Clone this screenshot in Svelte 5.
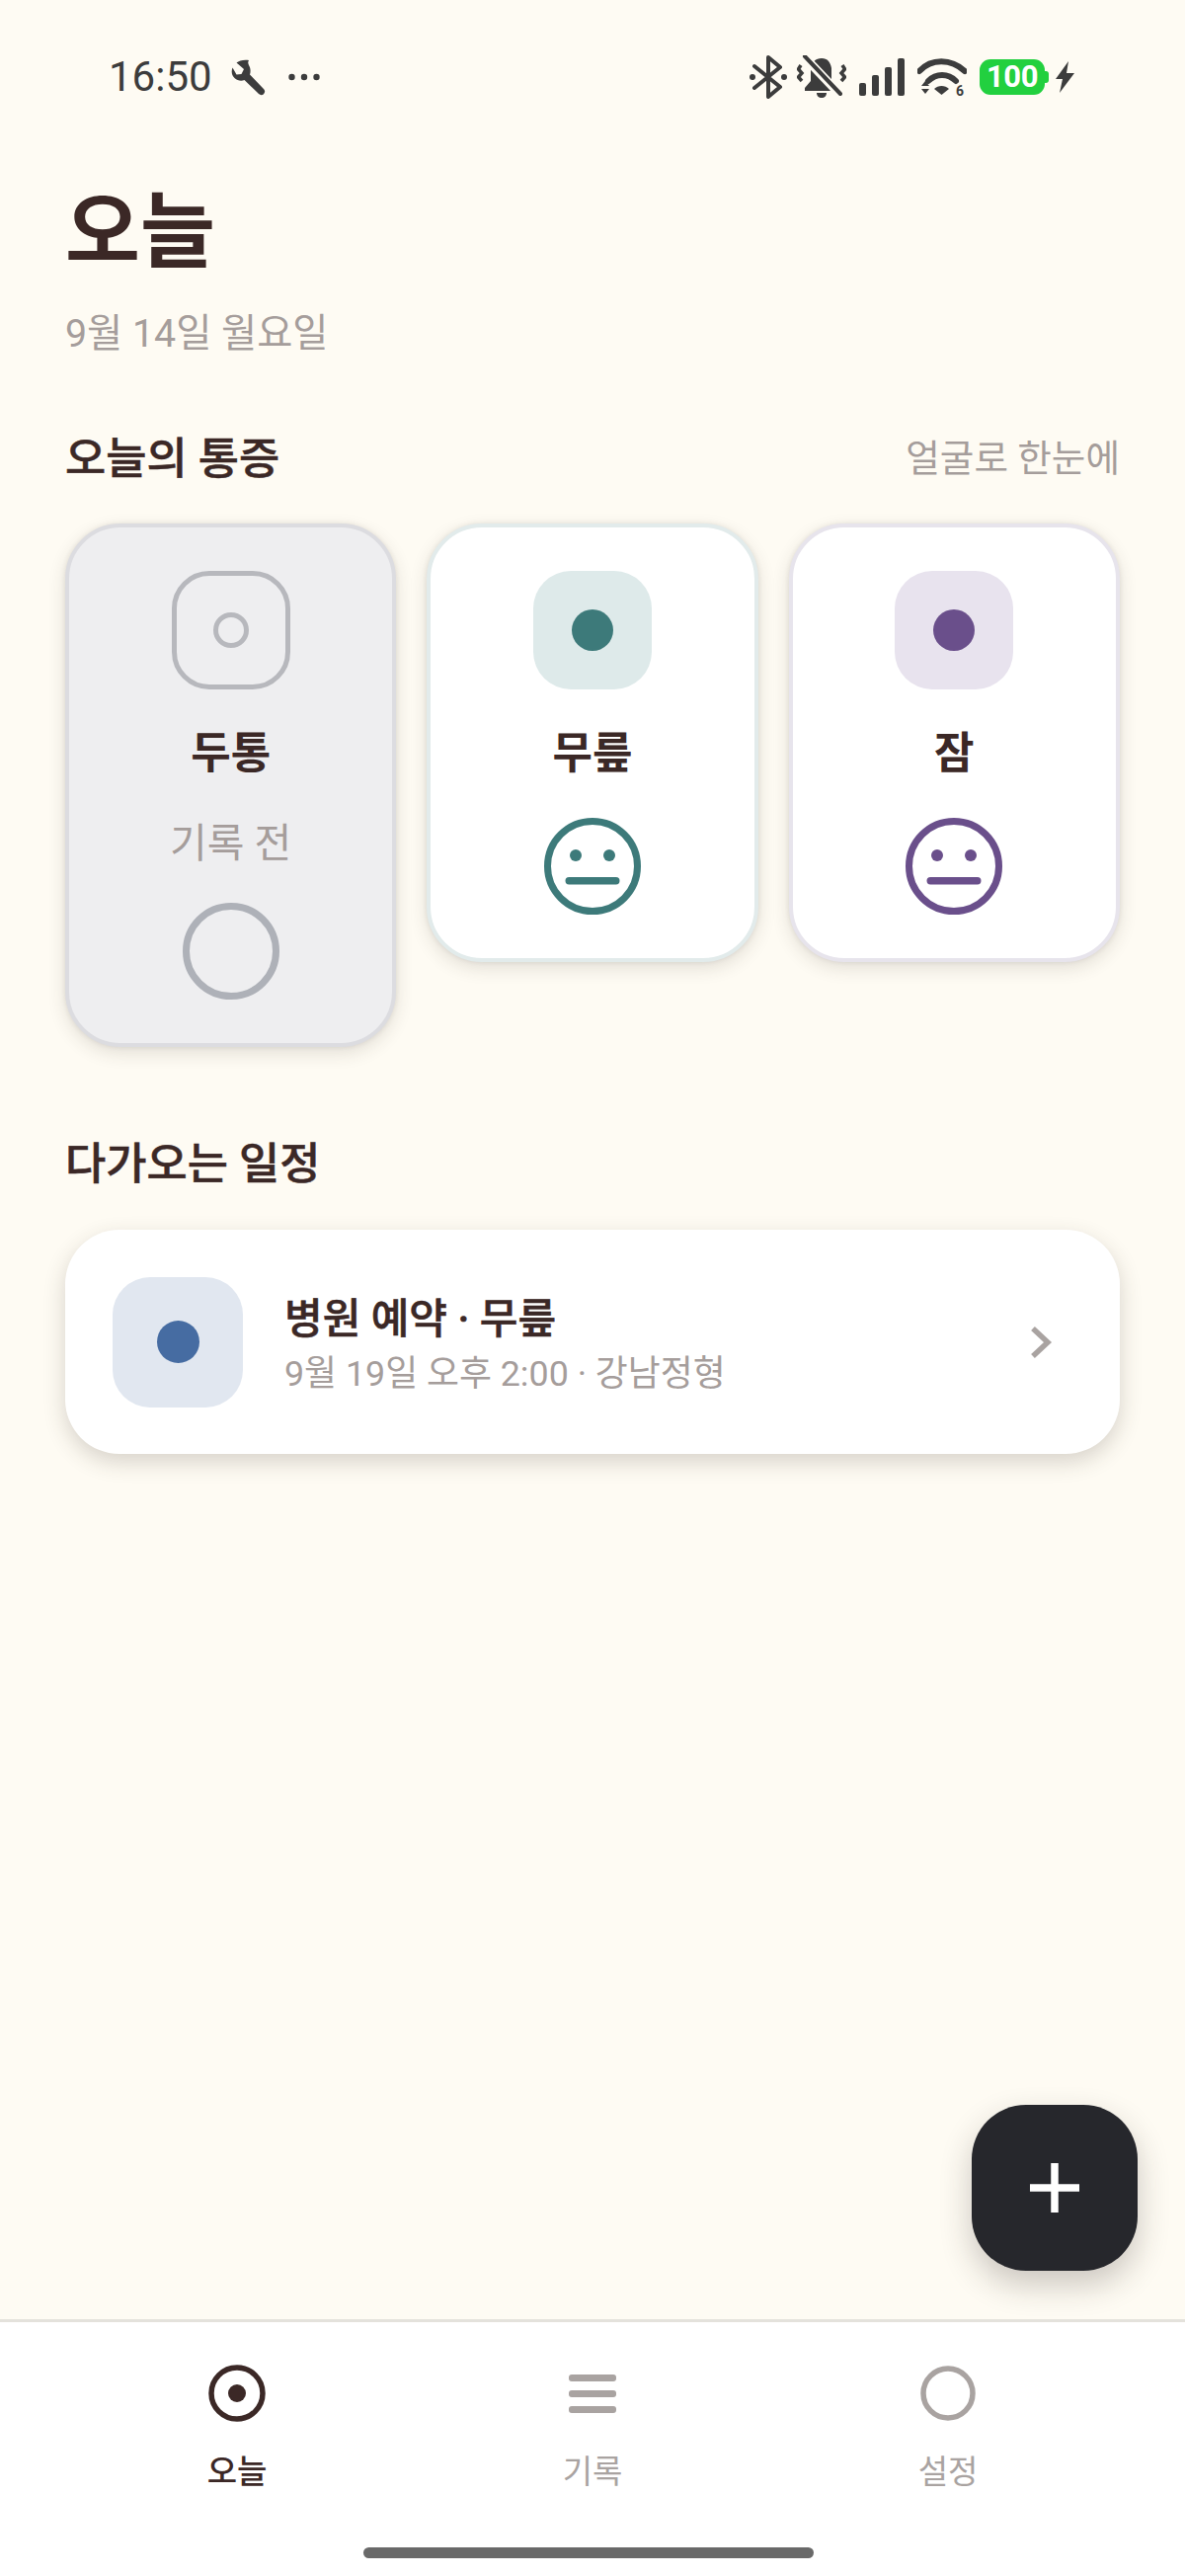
<script lang="ts">
  const pains = [
    { name: '두통', logged: false, tone: '#aeb1b8', tint: 'transparent', edge: '#dcdce0' },
    { name: '무릎', logged: true, tone: '#3d7a7a', tint: '#deeaea', edge: '#e2ebeb' },
    { name: '잠', logged: true, tone: '#6a4f8b', tint: '#e8e3ee', edge: '#e7e4ec' }
  ];
  const tabs = [
    { label: '오늘', kind: 'today' },
    { label: '기록', kind: 'list' },
    { label: '설정', kind: 'ring' }
  ];
</script>

<div class="screen">
  <header class="status">
    <div class="status-left">
      <span class="clock">16:50</span>
      <svg class="wrench" viewBox="0 0 37 37" width="37" height="37" aria-hidden="true">
        <path d="M18 1C13 0 8 1.500 5.500 3.500L13 10l-2.500 5-5 .5L1.500 8.500C0 12 .5 16 3.500 19c3 2.800 7 3.200 10 2l14.500 14c1.500 1.500 3.600 1.500 5 .2 1.500-1.400 1.600-3.500.2-5L19 15.500c1-3 .8-6.500-1-9.500-1-2-1-3.500 0-5z" fill="#3c3c3c"/>
      </svg>
      <svg class="more" viewBox="0 0 32 8" width="32" height="8" aria-hidden="true">
        <circle cx="3.500" cy="4" r="3.200" fill="#3c3c3c"/>
        <circle cx="16" cy="4" r="3.200" fill="#3c3c3c"/>
        <circle cx="28.500" cy="4" r="3.200" fill="#3c3c3c"/>
      </svg>
    </div>
    <div class="status-right">
      <svg viewBox="0 0 40 44" width="40" height="44" aria-hidden="true">
        <path d="M6 11l26 21-12 10V2l12 10L6 33" fill="none" stroke="#3c3c3c" stroke-width="4" stroke-linejoin="round" stroke-linecap="round"/>
        <circle cx="4" cy="22" r="3" fill="#3c3c3c"/>
        <circle cx="36" cy="22" r="3" fill="#3c3c3c"/>
      </svg>
      <svg class="bell" viewBox="0 0 50 44" width="50" height="44" aria-hidden="true">
        <path d="M25 3c-6 0-10 4-11 10v13l-6 7v3h32v-3l-5-6V13c-1-6-4-10-10-10z" fill="#3c3c3c"/>
        <path d="M20 38h10c0 3-2 5-5 5s-5-2-5-5z" fill="#3c3c3c"/>
        <path d="M6 0l38 40" stroke="#fefbf3" stroke-width="9"/>
        <path d="M8 1l36 38" stroke="#3c3c3c" stroke-width="4" stroke-linecap="round"/>
        <path d="M4 10L1.500 14 5 18l-3.500 4 3.500 4M46 10l2.500 4-3.500 4 3.500 4-3.500 4" fill="none" stroke="#3c3c3c" stroke-width="3.500"/>
      </svg>
      <svg class="signal" viewBox="0 0 46 38" width="46" height="38" aria-hidden="true">
        <rect x="0" y="25" width="7" height="13" rx="2" fill="#3c3c3c"/>
        <rect x="13" y="17" width="7" height="21" rx="2" fill="#3c3c3c"/>
        <rect x="26" y="9" width="7" height="29" rx="2" fill="#3c3c3c"/>
        <rect x="39" y="0" width="7" height="38" rx="2" fill="#3c3c3c"/>
      </svg>
      <svg class="wifi" viewBox="0 -2 50 44" width="50" height="44" aria-hidden="true">
        <path d="M2 14C14 1 34 1 48 14" fill="none" stroke="#3c3c3c" stroke-width="6" stroke-linecap="round"/>
        <path d="M11 24c8-8 20-8 28 0" fill="none" stroke="#3c3c3c" stroke-width="6" stroke-linecap="round"/>
        <path d="M17 32c4-4 11-4 15 0l-7.500 6z" fill="#3c3c3c"/>
        <path d="M4 29l4-5 4 5zM4 32l4 5 4-5z" fill="#3c3c3c"/>
        <text x="39" y="39" class="wifi-six">6</text>
      </svg>
      <div class="battery">
        <span class="battery-body">100</span>
        <span class="battery-cap"></span>
      </div>
      <svg class="bolt" viewBox="0 0 19 32" width="19" height="32" aria-hidden="true">
        <path d="M13 0L0 18h7l-3 14L19 12h-8z" fill="#3c3c3c"/>
      </svg>
    </div>
  </header>

  <main class="content">
    <h1>오늘</h1>
    <p class="date">9월 14일 월요일</p>

    <div class="section-head">
      <h2>오늘의 통증</h2>
      <span class="hint">얼굴로 한눈에</span>
    </div>

    <div class="pains">
      {#each pains as p}
        <article
          class="pain"
          class:empty={!p.logged}
          style="--tone: {p.tone}; --tint: {p.tint}; --edge: {p.edge}"
        >
          <div class="tile">
            <span class="dot"></span>
          </div>
          <h3>{p.name}</h3>
          {#if !p.logged}
            <p class="pending">기록 전</p>
            <span class="face-empty"></span>
          {:else}
            <svg class="face" viewBox="0 0 98 98" width="98" height="98" aria-hidden="true">
              <circle cx="49" cy="49" r="45.500" fill="none" stroke={p.tone} stroke-width="7"/>
              <circle cx="32" cy="38" r="6" fill={p.tone}/>
              <circle cx="66" cy="38" r="6" fill={p.tone}/>
              <rect x="21.500" y="60" width="55" height="7.500" rx="3.700" fill={p.tone}/>
            </svg>
          {/if}
        </article>
      {/each}
    </div>

    <h2 class="upcoming">다가오는 일정</h2>

    <div class="event">
      <div class="event-tile"><span class="event-dot"></span></div>
      <div class="event-text">
        <strong>병원 예약 · 무릎</strong>
        <span>9월 19일 오후 2:00 · 강남정형</span>
      </div>
      <svg class="chevron" viewBox="0 0 24 36" width="24" height="36" aria-hidden="true">
        <path d="M4 4l15 14L4 32" fill="none" stroke="#a9a3a1" stroke-width="5.500"/>
      </svg>
    </div>

    <button class="fab" type="button" aria-label="추가">
      <svg viewBox="0 0 50 50" width="50" height="50" aria-hidden="true">
        <path d="M25 0v50M0 25h50" stroke="#fff" stroke-width="7.500"/>
      </svg>
    </button>
  </main>

  <nav class="tabs">
    <div class="tab-row">
      {#each tabs as t, i}
        <div class="tab" class:active={i === 0}>
          <svg viewBox="0 0 58 58" width="58" height="58" aria-hidden="true">
            {#if t.kind === 'today'}
              <circle cx="29" cy="29" r="26" fill="none" stroke="#3b2826" stroke-width="5.500"/>
              <circle cx="29" cy="29" r="9" fill="#3b2826"/>
            {:else if t.kind === 'list'}
              <rect x="5" y="10" width="48" height="7" rx="3" fill="#a9a3a1"/>
              <rect x="5" y="26" width="48" height="7" rx="3" fill="#a9a3a1"/>
              <rect x="5" y="42" width="48" height="7" rx="3" fill="#a9a3a1"/>
            {:else}
              <circle cx="29" cy="29" r="25" fill="none" stroke="#a9a3a1" stroke-width="5.500"/>
            {/if}
          </svg>
          <span>{t.label}</span>
        </div>
      {/each}
    </div>
    <div class="home-bar"></div>
  </nav>
</div>

<style>
  :global(body) {
    margin: 0;
    background: #fefbf3;
  }

  .screen {
    width: 1200px;
    height: 2608px;
    display: flex;
    flex-direction: column;
    background: #fefbf3;
    color: #3b2826;
    font-family: Roboto, "Noto Sans CJK KR", sans-serif;
    overflow: hidden;
  }

  .status {
    height: 186px;
    flex: 0 0 auto;
    box-sizing: border-box;
    padding: 56px 112px 0 110px;
    display: flex;
    justify-content: space-between;
    align-items: flex-start;
  }
  .status-left {
    display: flex;
    align-items: center;
    height: 44px;
  }
  .clock {
    font-size: 42px;
    line-height: 44px;
    color: #3c3c3c;
  }
  .wrench {
    margin-left: 19px;
  }
  .more {
    margin-left: 21px;
  }
  .status-right {
    display: flex;
    align-items: center;
    height: 44px;
  }
  .bell {
    margin-left: 9px;
  }
  .signal {
    margin-left: 13px;
  }
  .wifi {
    margin-left: 13px;
  }
  .wifi-six {
    font-family: Roboto, sans-serif;
    font-weight: 700;
    font-size: 14px;
    fill: #3c3c3c;
  }
  .battery {
    display: flex;
    align-items: center;
    margin-left: 13px;
  }
  .battery-body {
    width: 66px;
    height: 36px;
    border-radius: 11px;
    background: #22d03f;
    color: #fff;
    font-size: 31px;
    font-weight: 700;
    line-height: 36px;
    text-align: center;
    letter-spacing: -0.5px;
  }
  .battery-cap {
    width: 4px;
    height: 12px;
    background: #22d03f;
    border-radius: 0 3px 3px 0;
  }
  .bolt {
    margin-left: 7px;
  }

  .content {
    flex: 1;
    min-height: 0;
    position: relative;
    padding: 0 66px;
  }
  h1 {
    margin: 0;
    font-size: 82.500px;
    line-height: 100px;
    font-weight: 700;
    color: #3b2826;
  }
  .date {
    margin: 26px 0 0;
    font-size: 39.300px;
    line-height: 52px;
    color: #a59d9b;
  }
  .section-head {
    margin-top: 73px;
    display: flex;
    justify-content: space-between;
    align-items: center;
  }
  h2 {
    margin: 0;
    font-size: 44.800px;
    line-height: 56px;
    font-weight: 500;
    -webkit-text-stroke: 0.5px #3b2826;
    color: #3b2826;
  }
  .hint {
    font-size: 37.600px;
    line-height: 44px;
    padding-bottom: 3px;
    color: #a59d9b;
  }

  .pains {
    margin-top: 37px;
    display: grid;
    grid-template-columns: repeat(3, 1fr);
    gap: 31px;
    align-items: start;
  }
  .pain {
    box-sizing: border-box;
    padding: 44px 0 44px;
    border: 4px solid var(--edge);
    border-radius: 56px;
    background: #fff;
    box-shadow:
      0 0 5px rgba(60, 50, 40, 0.1),
      0 6px 18px rgba(60, 50, 40, 0.14);
    display: flex;
    flex-direction: column;
    align-items: center;
  }
  .pain.empty {
    background: #eeeef0;
  }
  .tile {
    box-sizing: border-box;
    width: 120px;
    height: 120px;
    border-radius: 38px;
    background: var(--tint);
    display: flex;
    align-items: center;
    justify-content: center;
  }
  .empty .tile {
    border: 5px solid #b7b8bd;
  }
  .dot {
    box-sizing: border-box;
    width: 42px;
    height: 42px;
    border-radius: 50%;
    background: var(--tone);
  }
  .empty .dot {
    width: 36px;
    height: 36px;
    background: transparent;
    border: 5px solid #b7b8bd;
  }
  h3 {
    margin: 38px 0 0;
    font-size: 44px;
    line-height: 54px;
    font-weight: 700;
    color: #3b2826;
  }
  .pending {
    margin: 38px 0 0;
    font-size: 41px;
    line-height: 52px;
    color: #a59d9b;
  }
  .face {
    margin-top: 38px;
    display: block;
  }
  .face-empty {
    box-sizing: border-box;
    width: 98px;
    height: 98px;
    margin-top: 34px;
    border: 7px solid var(--tone);
    border-radius: 50%;
  }

  .upcoming {
    margin-top: 91px;
  }
  .event {
    margin-top: 38px;
    box-sizing: border-box;
    height: 227px;
    padding: 0 48px;
    background: #fff;
    border-radius: 55px;
    box-shadow: 0 8px 22px rgba(60, 50, 40, 0.2);
    display: flex;
    align-items: center;
  }
  .event-tile {
    width: 132px;
    height: 132px;
    border-radius: 38px;
    background: #e1e7f0;
    display: flex;
    align-items: center;
    justify-content: center;
    flex: 0 0 auto;
  }
  .event-dot {
    width: 43px;
    height: 43px;
    border-radius: 50%;
    background: #466ca2;
  }
  .event-text {
    margin-left: 42px;
    padding-top: 8px;
    flex: 1;
    display: flex;
    flex-direction: column;
    gap: 5px;
  }
  .event-text strong {
    font-size: 42px;
    line-height: 52px;
    font-weight: 500;
    -webkit-text-stroke: 0.6px #3b2826;
    color: #3b2826;
  }
  .event-text span {
    font-size: 35.800px;
    line-height: 48px;
    color: #a59d9b;
  }
  .chevron {
    margin-right: 20px;
  }

  .fab {
    position: absolute;
    right: 48px;
    bottom: 49px;
    width: 168px;
    height: 168px;
    padding: 0;
    border: 0;
    border-radius: 55px;
    background: #26272c;
    box-shadow: 0 14px 32px rgba(40, 35, 30, 0.24);
    display: flex;
    align-items: center;
    justify-content: center;
  }

  .tabs {
    flex: 0 0 auto;
    height: 260px;
    box-sizing: border-box;
    border-top: 3px solid #e4e2dc;
    background: #fff;
    position: relative;
    padding: 43px 60px 0;
  }
  .tab-row {
    display: grid;
    grid-template-columns: repeat(3, 1fr);
  }
  .tab {
    display: flex;
    flex-direction: column;
    align-items: center;
    gap: 29px;
    color: #a9a3a1;
    font-size: 33px;
    line-height: 44px;
  }
  .tab svg {
    display: block;
  }
  .tab.active {
    color: #3b2826;
    font-weight: 500;
  }
  .home-bar {
    position: absolute;
    left: 368px;
    bottom: 18px;
    width: 456px;
    height: 11px;
    border-radius: 6px;
    background: #696969;
  }
</style>
